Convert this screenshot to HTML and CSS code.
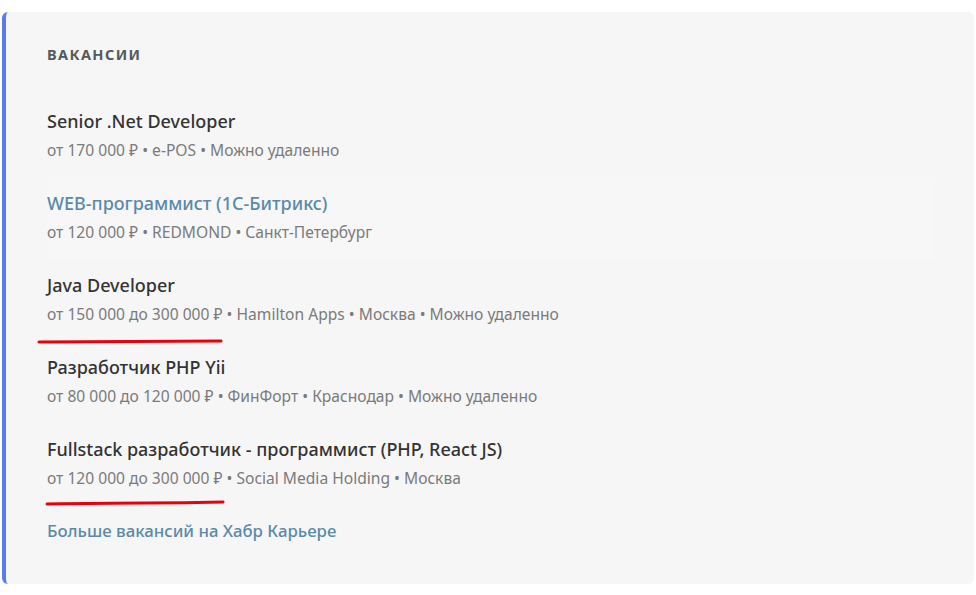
FILE: index.html
```html
<!DOCTYPE html>
<html lang="ru">
<head>
<meta charset="utf-8">
<title>Вакансии</title>
<link rel="stylesheet" href="styles.css">
</head>
<body>
<section class="panel">
  <h2 class="heading">Вакансии</h2>
  <ul class="list">
    <li class="item">
      <a class="title">Senior .Net Developer</a>
      <div class="meta">от 170 000 ₽ • e-POS • Можно удаленно</div>
    </li>
    <li class="item item-hover">
      <a class="title title-hover">WEB-программист (1С-Битрикс)</a>
      <div class="meta">от 120 000 ₽ • REDMOND • Санкт-Петербург</div>
    </li>
    <li class="item">
      <a class="title">Java Developer</a>
      <div class="meta">от 150 000 до 300 000 ₽ • Hamilton Apps • Москва • Можно удаленно</div>
    </li>
    <li class="item">
      <a class="title">Разработчик PHP Yii</a>
      <div class="meta">от 80 000 до 120 000 ₽ • ФинФорт • Краснодар • Можно удаленно</div>
    </li>
    <li class="item">
      <a class="title">Fullstack разработчик - программист (PHP, React JS)</a>
      <div class="meta">от 120 000 до 300 000 ₽ • Social Media Holding • Москва</div>
    </li>
  </ul>
  <a class="more">Больше вакансий на Хабр Карьере</a>
  <svg class="mark mark-1" width="186" height="8" viewBox="0 0 186 8"><path d="M2 4 L184 3" stroke="#e8000b" stroke-width="3" stroke-linecap="round" fill="none"/></svg>
  <svg class="mark mark-2" width="180" height="8" viewBox="0 0 180 8"><path d="M2 5 Q 60 4 100 4 T 178 3" stroke="#e8000b" stroke-width="3" stroke-linecap="round" fill="none"/></svg>
</section>
</body>
</html>
```

FILE: styles.css
```css
html, body {
  margin: 0;
  padding: 0;
  background: #ffffff;
}
body {
  font-family: "Noto Sans", "Open Sans", "DejaVu Sans", sans-serif;
}
.panel {
  position: relative;
  margin: 12px 2px 11px 2px;
  background: #f6f6f6;
  border-left: 4px solid #5b7bea;
  border-radius: 6px;
  padding: 32px 40px 41px 41px;
}
.heading {
  margin: 0;
  font-size: 14.5px;
  line-height: 20px;
  font-weight: 700;
  letter-spacing: 1.4px;
  text-transform: uppercase;
  color: #545a5e;
}
.list {
  list-style: none;
  margin: 31px 0 0 0;
  padding: 0;
}
.item {
  display: flex;
  flex-direction: column;
  gap: 5px;
  padding: 14px 0 15px 0;
}
.item-hover {
  background: #f7f7f7;
}
.title {
  font-size: 18px;
  line-height: 24px;
  font-weight: 500;
  color: #333333;
}
.title-hover {
  color: #5a8aa8;
}
.meta {
  font-size: 15.6px;
  line-height: 24px;
  color: #7b7b7b;
}
.more {
  display: block;
  margin-top: 14px;
  font-size: 16.8px;
  line-height: 24px;
  font-weight: 500;
  color: #5a8aa8;
}
.mark {
  position: absolute;
}
.mark-1 {
  left: 31px;
  top: 326px;
}
.mark-2 {
  left: 39px;
  top: 487px;
}
```
